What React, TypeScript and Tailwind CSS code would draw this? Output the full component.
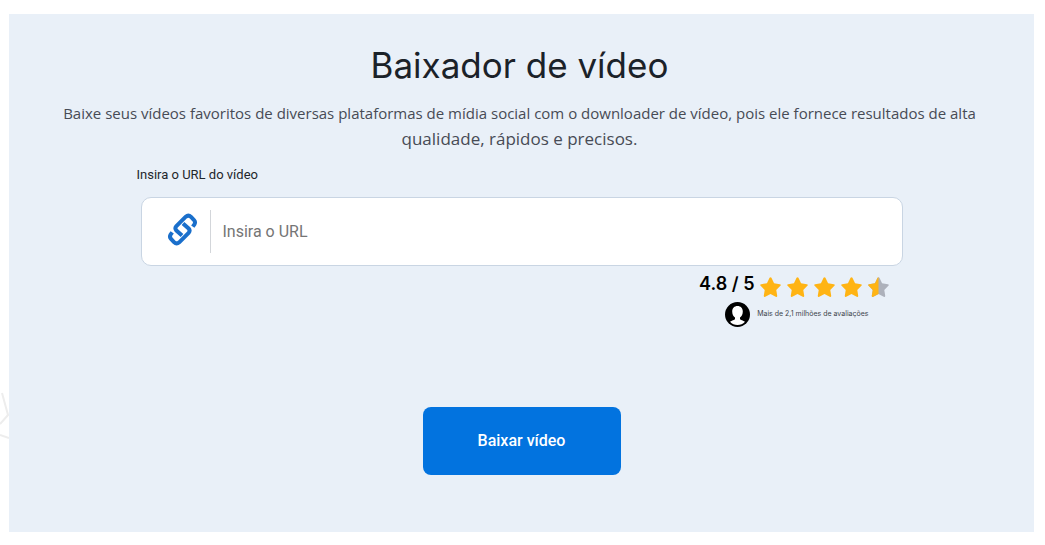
import { FC } from 'react'

const starPath =
  'M10.9 .8 13.4 6 18.9 6.8Q20.4 7.1 19.4 8.4L15.5 12.3 16.4 17.8Q16.4 19.5 15 18.9L10 16.3 5 18.9Q3.6 19.5 3.6 17.8L4.5 12.3 .6 8.4Q-.4 7.1 1.1 6.8L6.6 6 9.1 .8Q10 -.2 10.9 .8Z'

const Star: FC<{ half?: boolean }> = ({ half }) => (
  <svg viewBox="0 0 20 20" className="w-[21px] h-[21px]" aria-hidden="true">
    <path d={starPath} fill={half ? '#adb1bb' : '#ffb414'} />
    {half && (
      <>
        <clipPath id="left-half">
          <rect width="10" height="20" />
        </clipPath>
        <path d={starPath} fill="#ffb414" clipPath="url(#left-half)" />
      </>
    )}
  </svg>
)

const LinkIcon: FC = () => (
  <svg
    viewBox="-1 1 32 38"
    className="w-8 h-[38px] shrink-0"
    fill="none"
    stroke="#1a6fcb"
    strokeWidth="4"
    aria-hidden="true"
  >
    <path d="M25.8 14.6 27.4 12.4Q28.8 10 27 8L24 4.9Q21.4 2.3 18.8 4.7L9.4 14Q7.4 16.4 9.4 18.6L15 23.6" />
    <path d="M5.2 20.4 3.6 22.6Q2.2 25 4 27L7 30.1Q9.6 32.7 12.2 30.3L21.6 21Q23.6 18.6 21.6 16.4L16 11.4" />
  </svg>
)

const AvatarIcon: FC = () => (
  <svg viewBox="0 0 25 25" className="w-[25px] h-[25px]" aria-hidden="true">
    <circle cx="12.5" cy="12.5" r="12.5" fill="#000" />
    <path
      d="M12.5 4C9.4 4 7.2 6.2 7.2 9.4C7.2 12 8.4 14.4 10 15.6V17.2C8.6 18.4 6 18.8 5 19.8A10.3 10.3 0 0 0 20 19.8C19 18.8 16.4 18.4 15 17.2V15.6C16.6 14.4 17.8 12 17.8 9.4C17.8 6.2 15.6 4 12.5 4Z"
      fill="#fff"
    />
  </svg>
)

export default function App() {
  return (
    <main className="relative bg-white pt-[14px] pr-[11px] pb-[13px] pl-[9px] font-['Roboto',sans-serif]">
      {/* Background decoration */}
      <svg
        viewBox="0 0 9 50"
        className="absolute left-0 top-[392px] w-[9px] h-[50px]"
        fill="none"
        stroke="#ededed"
        strokeWidth="2"
        aria-hidden="true"
      >
        <path d="M2 1 8 23 0 32M0 43 9 46" />
      </svg>

      <section className="bg-[#e9f0f8] px-4 pt-[27px] pb-[57px] text-center">
        <div className="pr-1">
          <h1 className="font-['Inter',sans-serif] text-[35px] leading-[48px] text-[#1b2229]">
            Baixador de vídeo
          </h1>
          <p className="mt-3 font-['Open_Sans',sans-serif] text-[#474b55]">
            <span className="block text-[15px] leading-[25px]">
              Baixe seus vídeos favoritos de diversas plataformas de mídia social com o downloader
              de vídeo, pois ele fornece resultados de alta
            </span>
            <span className="block text-[17px] leading-[25px]">
              qualidade, rápidos e precisos.
            </span>
          </p>
        </div>

        <form className="mx-auto mt-[14px] max-w-[762px]" onSubmit={(e) => e.preventDefault()}>
          <label htmlFor="url" className="block -ml-1 text-left text-[13px] leading-5 text-[#22262b]">
            Insira o URL do vídeo
          </label>
          <div className="mt-3 flex h-[69px] items-center rounded-[10px] border border-[#c9d5e3] bg-white px-6">
            <LinkIcon />
            <input
              id="url"
              type="text"
              placeholder="Insira o URL"
              className="ml-3 h-[43px] min-w-0 flex-1 border-l border-[#d3d6da] pl-3 text-[16px] text-[#333] outline-none placeholder:text-[#757575]"
            />
          </div>

          {/* Rating */}
          <div className="mt-[3px] mr-[14px] flex flex-col items-end font-['Inter',sans-serif]">
            <div className="flex items-center gap-[5px]">
              <span className="text-[18px] leading-7 font-semibold text-black">4.8 / 5</span>
              <div className="mt-2 flex gap-[6px]">
                <Star />
                <Star />
                <Star />
                <Star />
                <Star half />
              </div>
            </div>
            <div className="mt-1 mr-5 flex items-center gap-[7px]">
              <AvatarIcon />
              <span className="text-[7px] text-[#40444c]">Mais de 2,1 milhões de avaliações</span>
            </div>
          </div>

          <button
            type="submit"
            className="mt-20 h-[68px] w-[198px] rounded-lg bg-[#0273df] text-[16px] font-medium text-white"
          >
            Baixar vídeo
          </button>
        </form>
      </section>
    </main>
  )
}
